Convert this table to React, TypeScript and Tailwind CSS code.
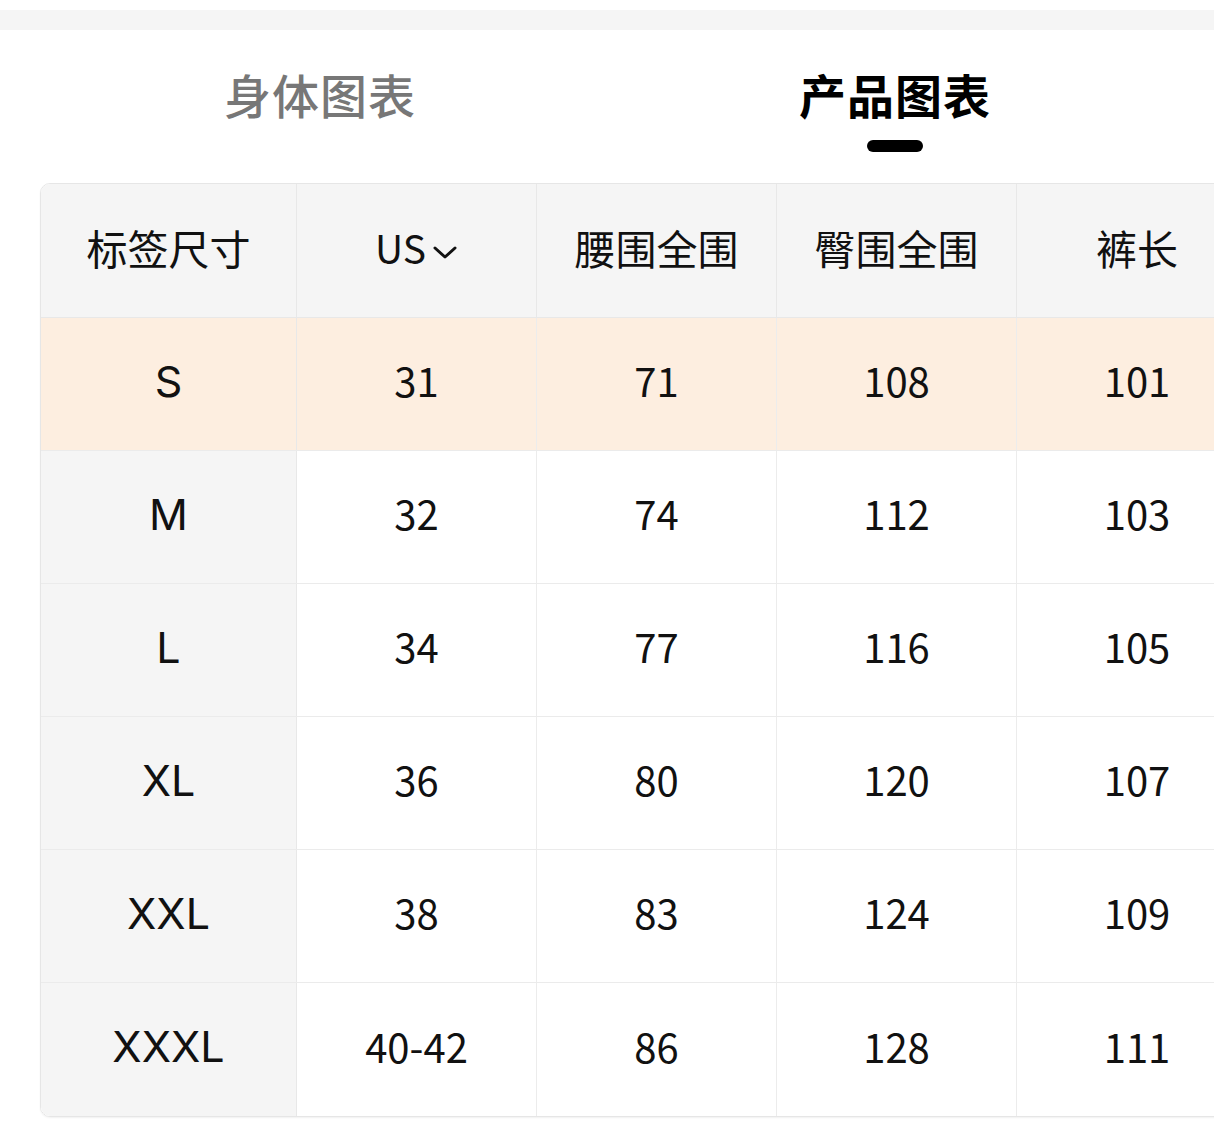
import React from "react";

const font = {
  fontFamily: '"Noto Sans CJK SC", "Noto Sans", sans-serif',
};

const latin = {
  fontFamily: 'Inter, "Noto Sans", sans-serif',
};

const rows = [
  { size: "S", us: "31", waist: "71", hip: "108", len: "101", active: true },
  { size: "M", us: "32", waist: "74", hip: "112", len: "103" },
  { size: "L", us: "34", waist: "77", hip: "116", len: "105" },
  { size: "XL", us: "36", waist: "80", hip: "120", len: "107" },
  { size: "XXL", us: "38", waist: "83", hip: "124", len: "109" },
  { size: "XXXL", us: "40-42", waist: "86", hip: "128", len: "111" },
];

function Chevron() {
  return (
    <svg width="26" height="18" viewBox="0 0 26 18" className="ml-[6px] mt-[8px]">
      <polyline
        points="3,5 13,14 23,5"
        fill="none"
        stroke="#111"
        strokeWidth="3"
        strokeLinecap="round"
        strokeLinejoin="round"
      />
    </svg>
  );
}

export default function App() {
  return (
    <div className="w-[1214px] h-[1129px] bg-white overflow-hidden text-[#111]" style={font}>
      {/* top strip */}
      <div className="h-[10px]" />
      <div className="h-[20px] bg-[#f5f5f5]" />

      {/* tabs */}
      <div className="flex h-[153px]">
        <div className="w-[640px] flex flex-col items-center pt-[35px]">
          <span className="text-[47px] leading-[58px] font-medium text-[#777] tracking-[1px]">身体图表</span>
        </div>
        <div className="w-[510px] flex flex-col items-center pt-[35px]">
          <span className="text-[47px] leading-[58px] font-bold text-black tracking-[1px]">产品图表</span>
          <div className="w-[56px] h-[12px] rounded-full bg-black mt-[17px]" />
        </div>
      </div>

      {/* table */}
      <div className="pl-[40px]">
        <div className="w-[1260px] rounded-[10px] border border-[#e6e6e6] overflow-hidden shadow-[0_1px_2px_rgba(0,0,0,0.06)]">
          <div className="grid grid-cols-[256px_240px_240px_240px_240px] h-[134px] bg-[#f5f5f5] border-b border-[#e8e8e8] text-[41px]">
            <div className="flex items-center justify-center pb-[6px] border-r border-[#e8e8e8]">标签尺寸</div>
            <div className="flex items-center justify-center pb-[6px] border-r border-[#e8e8e8]">
              <span className="text-[39px]">US</span>
              <Chevron />
            </div>
            <div className="flex items-center justify-center pb-[6px] border-r border-[#e8e8e8]">腰围全围</div>
            <div className="flex items-center justify-center pb-[6px] border-r border-[#e8e8e8]">臀围全围</div>
            <div className="flex items-center justify-center pb-[6px]">裤长</div>
          </div>
          {rows.map((r, i) => (
            <div
              key={r.size}
              className={`grid grid-cols-[256px_240px_240px_240px_240px] h-[133px] text-[40px] ${
                i < rows.length - 1 ? "border-b border-[#ebebeb]" : ""
              } ${r.active ? "bg-[#fdeee0]" : "bg-white"}`}
            >
              <div
                className={`flex items-center justify-center pb-[6px] border-r border-[#e8e8e8] text-[43px] ${
                  r.active ? "" : "bg-[#f5f5f5]"
                }`}
                style={latin}
              >
                {r.size}
              </div>
              <div className="flex items-center justify-center pb-[8px] border-r border-[#ececec]">{r.us}</div>
              <div className="flex items-center justify-center pb-[8px] border-r border-[#ececec]">{r.waist}</div>
              <div className="flex items-center justify-center pb-[8px] border-r border-[#ececec]">{r.hip}</div>
              <div className="flex items-center justify-center pb-[8px]">{r.len}</div>
            </div>
          ))}
        </div>
      </div>
    </div>
  );
}
